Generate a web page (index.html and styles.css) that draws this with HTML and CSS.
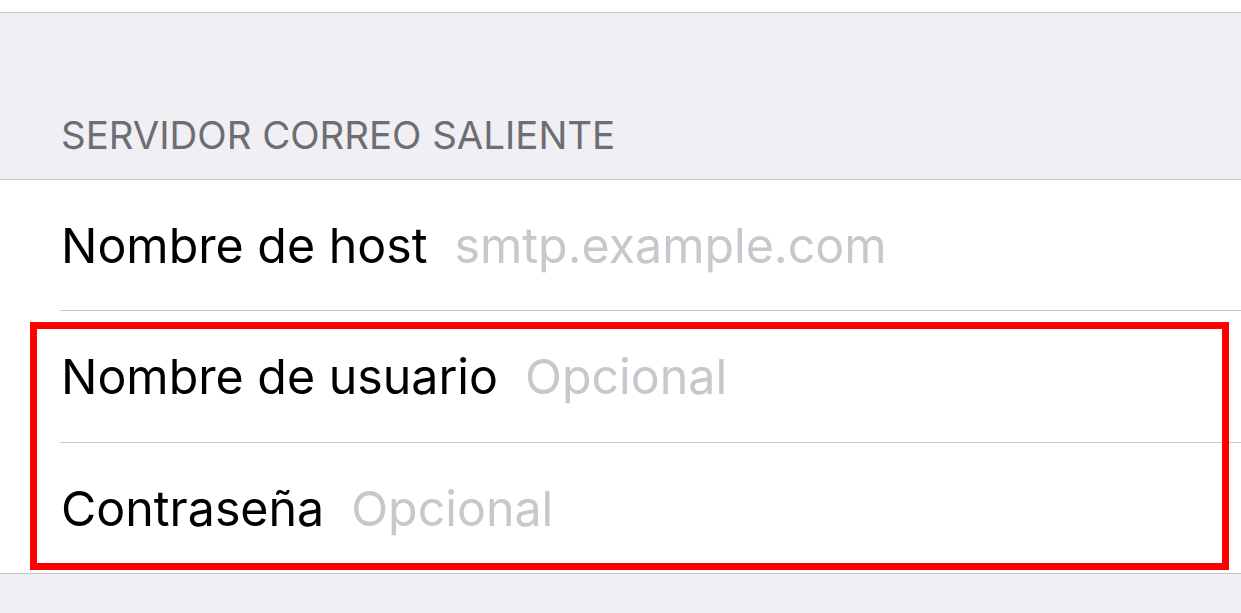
FILE: index.html
```html
<!DOCTYPE html>
<html lang="es">
<head>
<meta charset="utf-8">
<link rel="stylesheet" href="styles.css">
</head>
<body>
<div class="top"></div>
<div class="group">
  <div class="header">SERVIDOR CORREO SALIENTE</div>
  <div class="section">
    <div class="row first"><div class="cell"><span class="label">Nombre de host</span><span class="value">smtp.example.com</span></div></div>
    <div class="row"><div class="cell"><span class="label">Nombre de usuario</span><span class="value">Opcional</span></div></div>
    <div class="row last"><div class="cell"><span class="label">Contraseña</span><span class="value">Opcional</span></div></div>
    <div class="highlight"></div>
  </div>
  <div class="bottom"></div>
</div>
</body>
</html>
```
FILE: styles.css
```css
html, body {
  margin: 0;
  padding: 0;
  background: #efeff4;
  font-family: Inter, "Liberation Sans", sans-serif;
  overflow: hidden;
}
.top {
  height: 12px;
  background: #ffffff;
  border-bottom: 1px solid #c8c7cc;
}
.group {
  background: #efeff4;
}
.header {
  height: 166px;
  box-sizing: border-box;
  padding: 0 0 25px 61px;
  display: flex;
  align-items: flex-end;
  font-size: 38.4px;
  line-height: 1;
  color: #6d6d72;
}
.section {
  position: relative;
  background: #ffffff;
  border-top: 1px solid #c8c7cc;
  border-bottom: 1px solid #c8c7cc;
}
.row {
  padding-left: 60px;
}
.cell {
  height: 131px;
  display: flex;
  align-items: center;
  border-bottom: 1px solid #c8c7cc;
  font-size: 48.3px;
  padding-left: 1px;
}
.row.first .cell,
.row.last .cell {
  height: 130px;
}
.row.last .cell {
  border-bottom: none;
}
.label {
  color: #000000;
  margin-right: 27px;
}
.value {
  color: #c7c7cd;
}
.highlight {
  position: absolute;
  left: 30px;
  top: 142px;
  width: 1199px;
  height: 248px;
  box-sizing: border-box;
  border: 7px solid #ff0000;
}
.bottom {
  height: 40px;
}
```
